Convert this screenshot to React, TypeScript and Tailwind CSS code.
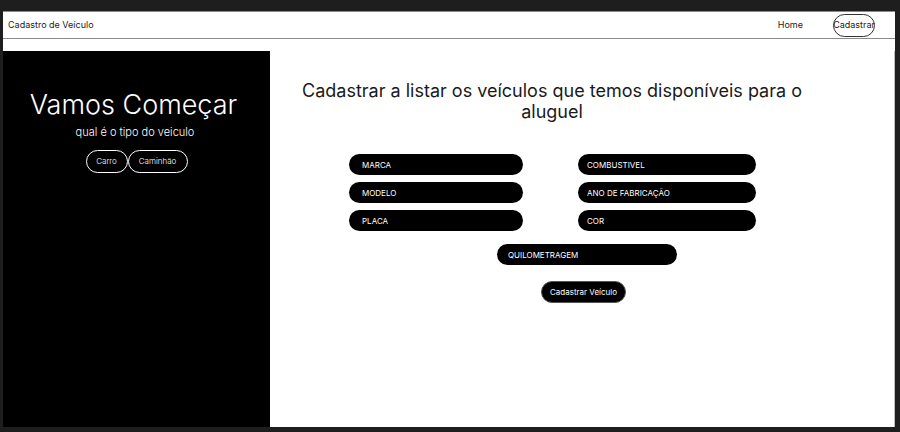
import React from "react";

const font = { fontFamily: "Inter, 'Noto Sans', sans-serif" };

function Field({ label, w, pl }: { label: string; w: string; pl: string }) {
  return (
    <div className={`${w} ${pl} h-[21px] rounded-full bg-black text-white text-[8px] flex items-center uppercase`}>
      {label}
    </div>
  );
}

export default function App() {
  return (
    <div className="w-[900px] h-[432px] bg-[#1e1e1e] pt-[11px] pl-[3px] pr-[5px] pb-[5px]" style={font}>
      <div className="w-full h-full bg-white flex flex-col">
        <nav className="h-[28px] shrink-0 border-t border-b border-[#8a8a8a] flex items-center justify-between pl-[5px] pr-[20px] text-[9px] text-[#222]">
          <span>Cadastro de Veículo</span>
          <div className="flex items-center">
            <span className="mr-[30px]">Home</span>
            <span className="h-[23px] w-[42px] whitespace-nowrap rounded-full border border-[#333] flex items-center justify-center">Cadastrar</span>
          </div>
        </nav>
        <div className="h-[12px] shrink-0" />
        <div className="flex flex-1 min-h-0">
          <aside className="w-[267px] shrink-0 bg-black text-white flex flex-col items-center pt-[38px]">
            <h1 className="text-[27px] leading-[32px] font-light mr-[6px]">Vamos Começar</h1>
            <p className="text-[11px] mt-[3px] font-light mr-[3px]">qual é o tipo do veiculo</p>
            <div className="flex mt-[9px] text-[8px] font-light">
              <span className="h-[23px] w-[42px] rounded-full border border-white flex items-center justify-center">Carro</span>
              <span className="h-[23px] w-[60px] rounded-full border border-white flex items-center justify-center">Caminhão</span>
            </div>
          </aside>
          <main className="flex-1 flex flex-col border-r border-[#bbb]">
            <div className="pt-[29px] pl-[23px]">
              <h2 className="w-[518px] text-center text-[18px] leading-[21px] text-[#1a1a1a] font-normal">
                Cadastrar a listar os veículos que temos disponíveis para o aluguel
              </h2>
            </div>
            <div className="ml-[79px] mt-[32px] grid grid-cols-[174px_178px] gap-x-[55px] gap-y-[7px]">
              <Field label="MARCA" w="w-[174px]" pl="pl-[13px]" />
              <Field label="COMBUSTIVEL" w="w-[178px]" pl="pl-[9px]" />
              <Field label="MODELO" w="w-[174px]" pl="pl-[13px]" />
              <Field label="ANO DE FABRICAÇÃO" w="w-[178px]" pl="pl-[9px]" />
              <Field label="PLACA" w="w-[174px]" pl="pl-[13px]" />
              <Field label="COR" w="w-[178px]" pl="pl-[9px]" />
            </div>
            <div className="flex justify-center mt-[13px] pl-[10px]">
              <Field label="QUILOMETRAGEM" w="w-[180px]" pl="pl-[11px]" />
            </div>
            <div className="flex justify-center mt-[16px] pl-[3px]">
              <button className="h-[22px] w-[85px] rounded-full bg-black text-white text-[8px] border border-[#555]">
                Cadastrar Veículo
              </button>
            </div>
          </main>
        </div>
      </div>
    </div>
  );
}
